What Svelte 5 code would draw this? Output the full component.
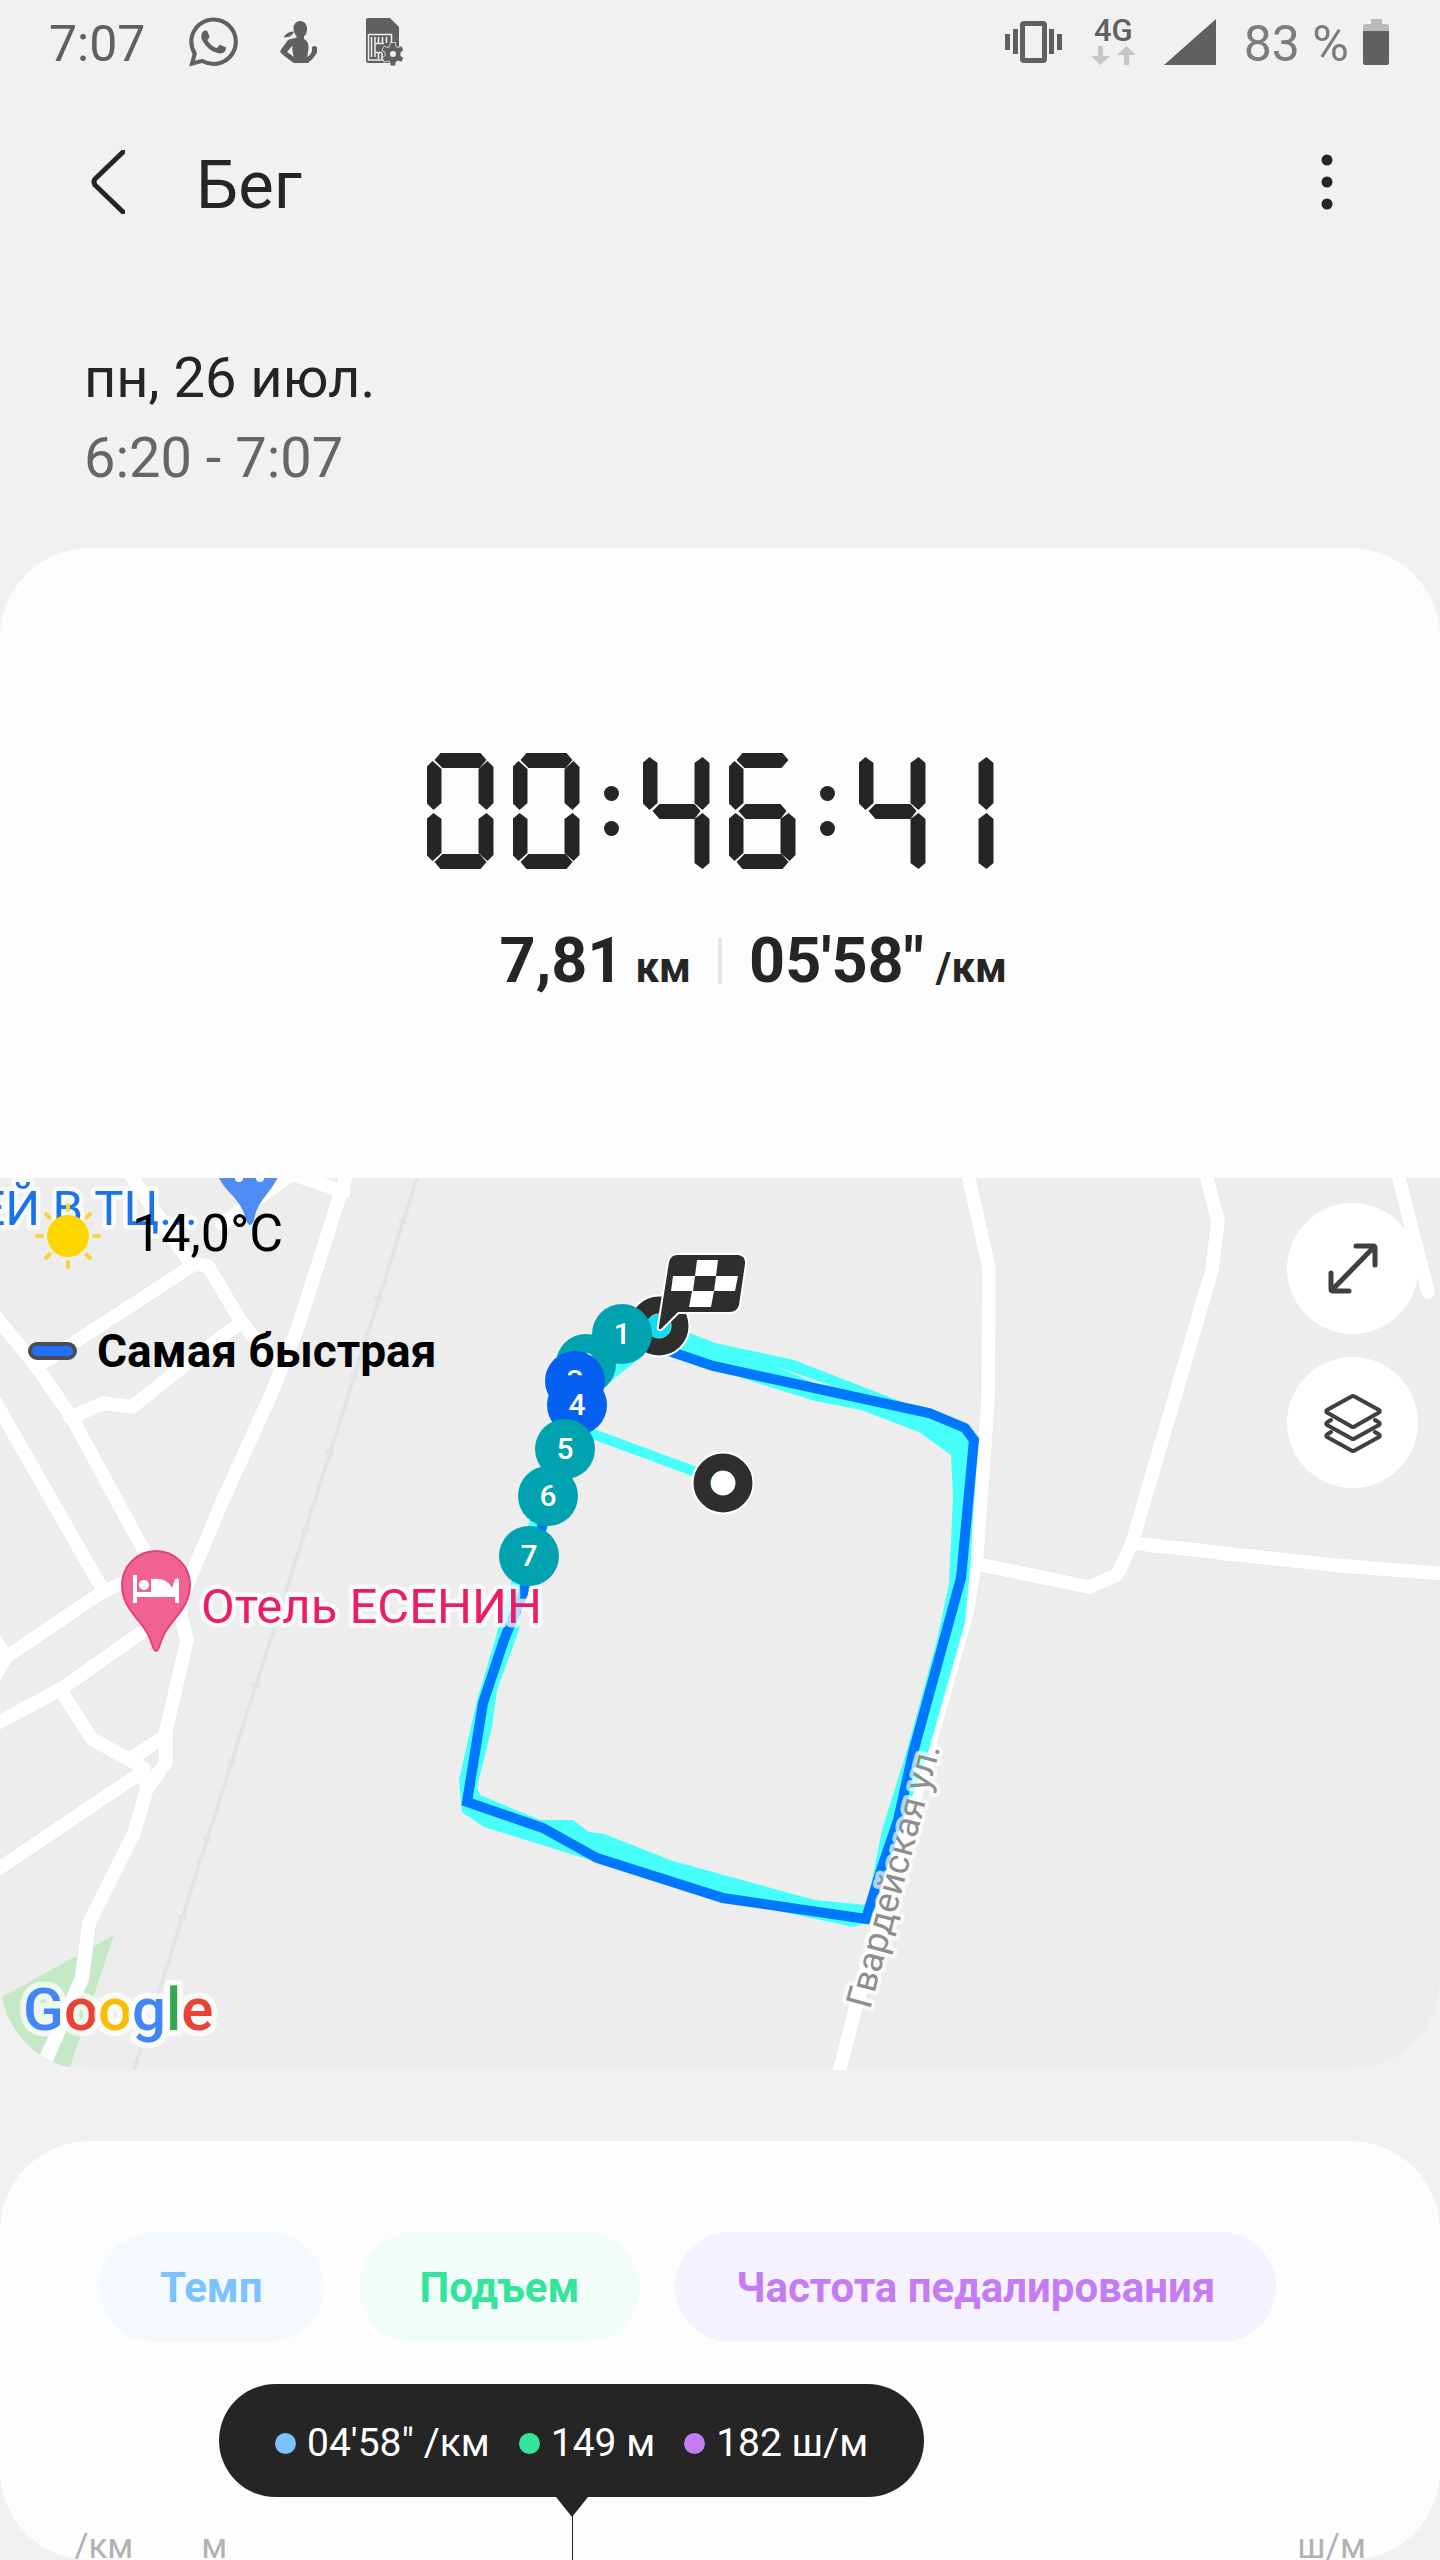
<script>
  const segments = {
    '0': 'abcdef',
    '1': 'bc',
    '4': 'fgbc',
    '6': 'afgedc'
  };
  const duration = '00:46:41';

  const kilometres = [
    { n: 1, x: 622, y: 1334 },
    { n: 2, x: 586, y: 1364 },
    { n: 3, x: 575, y: 1381, fast: true },
    { n: 4, x: 577, y: 1405, fast: true },
    { n: 5, x: 565, y: 1449 },
    { n: 6, x: 548, y: 1496 },
    { n: 7, x: 529, y: 1556 }
  ];

  const roads = [
    'M348,1170 L298,1327 L273,1390 L223,1500 L185,1590 L180,1611 L187,1640 L166,1731 L166,1762 L147,1789 L134,1833 L89,1923 L82,1978 L46,2059 L38,2080',
    'M-8,1312 L37,1367 L72,1418 L142,1547 L178,1608',
    'M-8,1396 L0,1410 L104,1592',
    'M150,1576 L123,1583 L101,1593 L6,1657 L-12,1688 M6,1657 L-8,1634',
    'M-8,1726 L61,1689 L142,1632 L178,1607',
    'M61,1691 L92,1739 L130,1760 L144,1768 L147,1789',
    'M-8,1873 L138,1775',
    'M130,1759 L163,1738',
    'M127,1170 L190,1263 L208,1266 L240,1320 L273,1362',
    'M192,1266 L75,1342 L36,1367',
    'M240,1323 L200,1353 L132,1407 L104,1403 L70,1418',
    'M222,1224 L292,1174 L344,1192',
    'M967,1170 L989,1268 L988,1400 L977,1553 L967,1612 L855,2010 L837,2080',
    'M1205,1170 L1218,1221 L1212,1270 L1132,1543 L1117,1575 L1089,1587 L977,1564',
    'M1132,1543 L1240,1555 L1343,1566 L1450,1574',
    'M1397,1170 L1428,1292'
  ];

  const railTicks = [
    [403, 1221], [378, 1298], [354, 1376], [330, 1453], [306, 1530],
    [280, 1608], [256, 1685], [231, 1762], [207, 1839], [182, 1917]
  ];

  const rays = [0, 45, 90, 135, 180, 225, 270, 315];
</script>

<div class="app">
  <header class="status">
    <div class="group">
      <span class="clock">7:07</span>
      <svg class="whatsapp" viewBox="0 0 24 24" aria-hidden="true">
        <path d="M17.472 14.382c-.297-.149-1.758-.867-2.03-.967-.273-.099-.471-.148-.67.15-.197.297-.767.966-.94 1.164-.173.199-.347.223-.644.075-.297-.15-1.255-.463-2.39-1.475-.883-.788-1.48-1.761-1.653-2.059-.173-.297-.018-.458.13-.606.134-.133.298-.347.446-.52.149-.174.198-.298.298-.497.099-.198.05-.371-.025-.52-.075-.149-.669-1.612-.916-2.207-.242-.579-.487-.5-.669-.51-.173-.008-.371-.01-.57-.01-.198 0-.52.074-.792.372-.272.297-1.04 1.016-1.04 2.479 0 1.462 1.065 2.875 1.213 3.074.149.198 2.096 3.2 5.077 4.487.709.306 1.262.489 1.694.625.712.227 1.36.195 1.871.118.571-.085 1.758-.719 2.006-1.413.248-.694.248-1.289.173-1.413-.074-.124-.272-.198-.57-.347m-5.421 7.403h-.004a9.87 9.87 0 01-5.031-1.378l-.361-.214-3.741.982.998-3.648-.235-.374a9.86 9.86 0 01-1.51-5.26c.001-5.45 4.436-9.884 9.888-9.884 2.64 0 5.122 1.03 6.988 2.898a9.825 9.825 0 012.893 6.994c-.003 5.45-4.437 9.884-9.885 9.884m8.413-18.297A11.815 11.815 0 0012.05 0C5.495 0 .16 5.335.157 11.892c0 2.096.547 4.142 1.588 5.945L.057 24l6.305-1.654a11.882 11.882 0 005.683 1.448h.005c6.554 0 11.89-5.335 11.893-11.893a11.821 11.821 0 00-3.48-8.413z" />
      </svg>
      <svg class="woman" viewBox="0 0 38 42" aria-hidden="true">
        <path d="M20 0c4 0 7 3 7 7 0 3-.5 7-3 8v3c3 1.500 4.500 4 4.500 8 0 4-1 6-1 10 2.500-2 4.500-4.500 4.500-6.500v-3c1-2 4-2 5 0v5c-2 4-5 7-9 10.500-2 1.200-11 1.300-14 0C9 38.500 4 35 .5 31.500c-.7-1 0-2 .5-3L8 19c2-1.500 6-1 8.500-2.500V15C14 13 13.500 9 13.500 7c0-4 3-7 6.500-7z" />
        <path d="M14 10.500c-1 3-4 6-10.500 6 1.500-3 5-6 10.500-6z" />
        <path class="paper" d="M12.500 24.500L7 31l7 5c-1.500-4-2-7-1.500-11.500z" />
      </svg>
      <svg class="sim" viewBox="0 0 38 48" aria-hidden="true">
        <path d="M2 0h22l9 9v31a5 5 0 0 1-5 5H2a2 2 0 0 1-2-2V2a2 2 0 0 1 2-2z" />
        <path class="line" d="M2.500 16.500h23v11M2.500 16.500V42H20M5.500 19v20M9 19v20M9 25.500h9M12.500 19v6M16.500 19v6M20.500 19v6M9 34.500h7M12.500 35v6M16 35v6" />
        <path class="gear" d="M24 24h5l.5 4 2.500 1.200 3.500-1.700 2 4-3 2.500v3.500l3 2.500-2 4-3.500-1.500-2.500 1.500-.5 4h-5l-.5-4-2.500-1.500-3.500 1.500-2-4 3-2.500V34l-3-2.500 2-4 3.500 1.700 2.500-1.200z" transform="translate(2 2.500) scale(.94)" />
        <circle class="paper" cx="27" cy="36" r="3" />
      </svg>
    </div>
    <div class="group">
      <svg class="vibrate" viewBox="0 0 58 42" aria-hidden="true">
        <rect x="0" y="13" width="5" height="16" /><rect x="8" y="8" width="5" height="25" />
        <rect x="44" y="8" width="5" height="25" /><rect x="52" y="13" width="5" height="16" />
        <path fill-rule="evenodd" d="M19 0h19a4 4 0 0 1 4 4v34a4 4 0 0 1-4 4H19a4 4 0 0 1-4-4V4a4 4 0 0 1 4-4zM20 5v32h17V5z" />
      </svg>
      <span class="network">
        <span>4G</span>
        <svg viewBox="0 0 45 19" aria-hidden="true">
          <path d="M7 0h5v10h7L9.500 19 0 10h7zM33 19h5V9h7L35.500 0 26 9h7z" />
        </svg>
      </span>
      <svg class="signal" viewBox="0 0 52 46" aria-hidden="true"><path d="M52 0v46H0z" /></svg>
      <span class="charge">83 %</span>
      <svg class="battery" viewBox="0 0 26 46" aria-hidden="true">
        <path class="pale" d="M8 0h11v5h5a2 2 0 0 1 2 2v6H0V7a2 2 0 0 1 2-2h6z" />
        <path d="M0 12h26v32a2 2 0 0 1-2 2H2a2 2 0 0 1-2-2z" />
      </svg>
    </div>
  </header>

  <nav class="bar">
    <button class="back" aria-label="Назад">
      <svg viewBox="0 0 34 64" aria-hidden="true"><path d="M32 2L4 29q-2 3 0 6L32 62" /></svg>
    </button>
    <h1>Бег</h1>
    <button class="more" aria-label="Ещё">
      <svg viewBox="0 0 12 56" aria-hidden="true">
        <circle cx="6" cy="6" r="5.500" /><circle cx="6" cy="28" r="5.500" /><circle cx="6" cy="50" r="5.500" />
      </svg>
    </button>
  </nav>

  <div class="when">
    <p>пн, 26 июл.</p>
    <p class="muted">6:20 - 7:07</p>
  </div>

  <section class="card">
    <div class="summary">
      <div class="timer" role="timer" aria-label={duration}>
        {#each duration as ch}
          {#if ch === ':'}
            <span class="colon"><i></i><i></i></span>
          {:else}
            <span class="digit" class:open={!segments[ch].includes('a')} class:narrow={ch === '1'}>
              {#each segments[ch] as s}<i class={'seg seg-' + s}></i>{/each}
            </span>
          {/if}
        {/each}
      </div>
      <div class="metrics">
        <p class="distance"><span>7,81</span><small>км</small></p>
        <span class="rule"></span>
        <p class="pace"><span>05'58"</span><small>/км</small></p>
      </div>
    </div>

    <div class="map">
      <svg class="canvas" viewBox="0 1178 1440 892" role="img" aria-label="Маршрут пробежки">
        <path class="park" d="M2,1997 L114,1935 L69,2070 L0,2070 Z" />
        <path class="rail" d="M417,1178 L330,1453 L256,1685 L134,2070" />
        {#each railTicks as [x, y]}
          <path class="rail" d="M{x - 4},{y - 1} l8,2" />
        {/each}
        {#each roads as d}<path class="edge" {d} />{/each}
        {#each roads as d}<path class="road" {d} />{/each}
        <path class="block" d="M158,1749 L148,1757 L151,1765 L155,1767 L159,1761 Z" />

        <path class="track" fill-rule="evenodd" d="M650,1326 L690,1333 L715,1343 L794,1360 L897,1400 L965,1426 L978,1440 L972,1533 L971,1560 L965,1623 L928,1753 L882,1880 L867,1923 L853,1927 L720,1898 L597,1862 L484,1827 L462,1812 L459,1780 L477,1700 L495,1640 L511,1583 L530,1520 L560,1440 L600,1360 Z
          M650,1350 L700,1362 L754,1382 L815,1401 L861,1410 L919,1432 L951,1455 L953,1497 L949,1583 L937,1640 L907,1750 L882,1830 L867,1905 L815,1900 L673,1861 L604,1834 L589,1832 L573,1820 L540,1820 L480,1795 L477,1787 L492,1727 L497,1690 L519,1630 L521,1610 L550,1520 L580,1440 L600,1390 Z" />
        <path class="block" d="M777,1367 L833,1386 L815,1383 Z" />
        <path class="link" d="M585,1431 L723,1482" />
        <path class="fast" d="M660,1348 L713,1366 L929,1413 L965,1428 L974,1440 L961,1578 L944,1640 L913,1753 L898,1820 L880,1873 L866,1919 L723,1898 L597,1858 L543,1828 L467,1802 L483,1703 L504,1640 L523,1593 L543,1523 L575,1440" />

        <g class="pin">
          <path d="M156,1651 C152,1651 153,1640 144,1628 C134,1614 122,1604 122,1585 A34,34 0 0 1 190,1585 C190,1604 178,1614 168,1628 C159,1640 160,1651 156,1651 Z" />
          <path class="bed" d="M133,1575 h4 v17 h14 v-13 q16,-2 21,9 l3,-9 q4,-2 4,2 v22 h-4 v-6 h-38 v6 h-4 Z" />
          <circle class="bed" cx="144" cy="1585" r="5" />
        </g>
        <path class="shop" d="M216,1170 C222,1192 240,1195 246,1220 Q250,1230 254,1220 C258,1198 272,1194 281,1170 Z" />
        <circle class="bed" cx="239" cy="1178" r="4" /><circle class="bed" cx="260" cy="1178" r="4" />

        <text class="place hotel" x="201" y="1623">Отель ЕСЕНИН</text>
        <text class="place mall" x="198" y="1225">ЕЙ В ТЦ...</text>
        <text class="street" transform="translate(870 2010) rotate(-75)">Гвардейская ул.</text>

        <circle class="ring halo" cx="723" cy="1483" r="23" /><circle class="ring" cx="723" cy="1483" r="21" />
        <circle class="hole" cx="723" cy="1483" r="12" />
        <circle class="ring halo" cx="659" cy="1326" r="23" /><circle class="ring" cx="659" cy="1326" r="21" />
        <circle class="hole cyan" cx="659" cy="1326" r="12" />
        <path class="flag" d="M677,1255 H738 Q746,1256 745,1264 L739,1305 Q737,1312 730,1312 H678 L661,1329 Q658,1330 659,1326 L669,1262 Q671,1255 677,1255 Z" />
        <path class="check" d="M697,1260 h21 l-2,16 h-21 Z M673,1276 h22 l-2,15 h-22 Z M716,1276 h22 l-3,15 h-21 Z M692,1291 h22 l-3,16 h-22 Z" />
        {#each kilometres as k}
          <circle class="km" class:quick={k.fast} cx={k.x} cy={k.y} r="30" />
          <text class="kmtext" x={k.x} y={k.y + 10}>{k.n}</text>
        {/each}

        <text class="google" x="23" y="2030"><tspan class="b">G</tspan><tspan class="r">o</tspan><tspan class="y">o</tspan><tspan class="b">g</tspan><tspan class="g">l</tspan><tspan class="r">e</tspan></text>
      </svg>

      <div class="overlay">
        <div class="weather">
          <svg viewBox="-33 -33 66 66" aria-hidden="true">
            <circle r="21" />
            {#each rays as a}<path d="M0,-26 V-31" transform="rotate({a})" />{/each}
          </svg>
          <span>14,0°C</span>
        </div>
        <div class="legend"><i></i><span>Самая быстрая</span></div>
      </div>
      <div class="tools">
        <button aria-label="Развернуть карту">
          <svg class="expand" viewBox="0 0 60 60" aria-hidden="true"><path d="M33 7H50Q52 7 52 9V26M8 34V50Q8 52 10 52H26M9 51L51 8" /></svg>
        </button>
        <button aria-label="Слои">
          <svg viewBox="0 0 60 60" aria-hidden="true">
            <path d="M28.500 3.500Q30 2.500 31.500 3.500L56 17Q57.500 18.500 56 19.500L31.500 33.500Q30 34.500 28.500 33.500L4 19.500Q2.500 18.500 4 17ZM8 27L4 29.500Q2.500 31 4 32L28.500 45.500Q30 46.500 31.500 45.500L56 32Q57.500 31 56 29.500L52 27M8 39L4 41.500Q2.500 43 4 44L28.500 57.500Q30 58.500 31.500 57.500L56 44Q57.500 43 56 41.500L52 39" />
          </svg>
        </button>
      </div>
    </div>
  </section>

  <section class="card chart">
    <div class="chips">
      <button class="chip blue">Темп</button>
      <button class="chip green">Подъем</button>
      <button class="chip violet">Частота педалирования</button>
    </div>
    <div class="tip" role="tooltip">
      <span class="value blue">04'58" /км</span>
      <span class="value green">149 м</span>
      <span class="value violet">182 ш/м</span>
    </div>
    <div class="axis">
      <span>/км</span>
      <span>м</span>
      <span class="last">ш/м</span>
    </div>
  </section>
</div>

<style>
  :global(body) {
    background: #f1f1f1;
  }
  .app {
    min-height: 100vh;
    overflow: hidden;
    background: #f1f1f1;
    color: #252525;
    font-family: Roboto, 'Liberation Sans', sans-serif;
  }
  p,
  h1 {
    margin: 0;
    font-weight: 400;
  }
  button {
    border: 0;
    padding: 0;
    background: none;
    color: inherit;
    font: inherit;
  }
  svg {
    display: block;
    flex: none;
  }

  .status {
    display: flex;
    justify-content: space-between;
    align-items: center;
    height: 84px;
    padding: 0 51px 0 49px;
    color: #606060;
    fill: #606060;
    font-size: 50px;
  }
  .group {
    display: flex;
    align-items: center;
  }
  .clock,
  .charge {
    padding-top: 4px;
  }
  .charge {
    margin: 0 14px 0 28px;
    color: #7c7c7c;
  }
  .whatsapp {
    width: 49px;
    height: 50px;
    margin-left: 44px;
  }
  .woman {
    width: 38px;
    height: 42px;
    margin-left: 42px;
  }
  .sim {
    width: 38px;
    height: 48px;
    margin-left: 48px;
  }
  .paper {
    fill: #f1f1f1;
  }
  .line {
    fill: none;
    stroke: #f1f1f1;
    stroke-width: 1.5;
  }
  .gear {
    stroke: #f1f1f1;
    stroke-width: 1.5;
    paint-order: stroke;
  }
  .vibrate {
    width: 58px;
    height: 42px;
  }
  .network {
    display: grid;
    justify-items: center;
    gap: 4px;
    margin: 0 28px;
    font-size: 31px;
    line-height: 23px;
    font-weight: 500;
  }
  .network svg {
    width: 45px;
    height: 19px;
    fill: #c6c6c6;
  }
  .signal {
    width: 52px;
    height: 46px;
  }
  .battery {
    width: 26px;
    height: 46px;
  }
  .pale {
    fill: #bababa;
  }

  .bar {
    display: flex;
    align-items: center;
    height: 196px;
    padding: 0 107px 0 91px;
  }
  .back svg {
    width: 34px;
    height: 64px;
    fill: none;
    stroke: #252525;
    stroke-width: 5;
    stroke-linecap: round;
  }
  .bar h1 {
    flex: 1;
    margin-left: 71px;
    padding-top: 6px;
    font-size: 67px;
    line-height: 80px;
  }
  .more svg {
    width: 12px;
    height: 56px;
    fill: #252525;
  }

  .when {
    padding: 58px 84px 50px;
    font-size: 56px;
    line-height: 80px;
  }
  .muted {
    color: #666;
  }

  .card {
    border-radius: 90px;
    background: #fdfdfd;
    overflow: hidden;
  }
  .summary {
    padding: 205px 0 187px;
  }
  .timer {
    display: flex;
    justify-content: center;
    align-items: center;
    gap: 19px;
    padding-right: 20px;
  }
  .digit {
    display: grid;
    width: 67px;
    height: 116px;
  }
  .digit.narrow {
    margin-left: -18px;
  }
  .seg {
    grid-area: 1 / 1;
    background: #252525;
  }
  .seg-a { clip-path: polygon(8px 7px, 14px 0, 54px 0, 60px 7px, 53px 15px, 16px 15px); }
  .seg-b { clip-path: polygon(52px 16px, 61px 8px, 67px 14px, 67px 50px, 60px 57px, 52px 50px); }
  .seg-c { clip-path: polygon(52px 66px, 60px 60px, 67px 66px, 67px 102px, 61px 108px, 52px 100px); }
  .seg-d { clip-path: polygon(8px 109px, 16px 101px, 53px 101px, 60px 109px, 54px 116px, 14px 116px); }
  .seg-e { clip-path: polygon(0 66px, 7px 60px, 15px 66px, 15px 100px, 6px 108px, 0 102px); }
  .seg-f { clip-path: polygon(0 14px, 6px 8px, 15px 16px, 15px 50px, 7px 57px, 0 50px); }
  .seg-g { clip-path: polygon(10px 58px, 17px 51px, 52px 51px, 58px 58px, 52px 66px, 17px 66px); }
  .open .seg-b { clip-path: polygon(52px 10px, 60px 4px, 67px 10px, 67px 50px, 60px 57px, 52px 50px); }
  .open .seg-c { clip-path: polygon(52px 66px, 60px 60px, 67px 66px, 67px 110px, 60px 116px, 52px 110px); }
  .open .seg-f { clip-path: polygon(0 10px, 7px 4px, 15px 10px, 15px 50px, 7px 57px, 0 50px); }
  .colon {
    display: grid;
    gap: 20px;
    margin: 0 5px;
  }
  .colon i {
    width: 15px;
    height: 15px;
    border-radius: 50%;
    background: #252525;
  }
  .metrics {
    display: grid;
    grid-template-columns: 1fr 4px 1fr;
    align-items: center;
    margin-top: 60px;
    margin-bottom: -2px;
    font-size: 63px;
    line-height: 64px;
  }
  .metrics p {
    display: flex;
    align-items: baseline;
    gap: 12px;
    font-weight: 700;
  }
  .metrics small {
    font-size: 42px;
    line-height: 42px;
  }
  .distance {
    justify-content: flex-end;
    padding-right: 27px;
  }
  .pace {
    padding-left: 27px;
  }
  .rule {
    height: 46px;
    background: #e6e6e6;
  }

  .map {
    position: relative;
    border-radius: 0 0 90px 90px;
    background: #ededed;
    overflow: hidden;
  }
  .canvas {
    width: 100%;
    height: auto;
    background: #ededed;
  }
  .park { fill: #c5e8c7; }
  .block { fill: #ededed; }
  .rail { fill: none; stroke: #e1e4e4; stroke-width: 4; }
  .edge, .road { fill: none; stroke-linecap: round; stroke-linejoin: round; }
  .edge { stroke: #e1e3e3; stroke-width: 15; }
  .road { stroke: #fff; stroke-width: 14; }
  .track { fill: #46fffa; }
  .link { stroke: #46fffa; stroke-width: 10; }
  .fast { fill: none; stroke: #0077ff; stroke-width: 10; }
  .pin path { fill: #f06292; stroke: #e5417b; stroke-width: 2; }
  .pin .bed, .bed { fill: #fff; stroke: none; }
  .shop { fill: #4f8df5; }
  .place, .street, .google { paint-order: stroke; stroke: rgba(255, 255, 255, 0.7); stroke-linejoin: round; }
  .place { font-size: 49px; stroke-width: 9; }
  .hotel { fill: #e91e63; }
  .mall { fill: #1a73e8; text-anchor: end; }
  .street { fill: #8b8f8f; font-size: 36px; stroke-width: 8; }
  .ring { fill: none; stroke: #2e2e2e; stroke-width: 17; }
  .ring.halo { stroke: #fff; }
  .hole { fill: #fff; }
  .hole.cyan { fill: #14dcee; }
  .flag { fill: #2e2e2e; stroke: #fff; stroke-width: 4; paint-order: stroke; }
  .check { fill: #fff; }
  .km { fill: #00a2b0; }
  .km.quick { fill: #055ff0; }
  .kmtext { fill: #fff; font-size: 30px; font-weight: 500; text-anchor: middle; }
  .google { font-size: 60px; font-weight: 500; stroke-width: 12; }
  .google .b { fill: #4285f4; }
  .google .r { fill: #ea4335; }
  .google .y { fill: #fbbc05; }
  .google .g { fill: #34a853; }

  .overlay {
    position: absolute;
    top: 25px;
    left: 28px;
    color: #000;
  }
  .weather {
    display: flex;
    align-items: flex-start;
    gap: 31px;
    padding-left: 7px;
    font-size: 52px;
    line-height: 62px;
  }
  .weather svg {
    width: 66px;
    height: 66px;
    fill: #ffd500;
    stroke: #f7d43a;
    stroke-width: 4;
    stroke-linecap: round;
  }
  .weather circle {
    stroke: none;
  }
  .legend {
    display: flex;
    align-items: center;
    gap: 20px;
    margin-top: 52px;
    font-size: 46px;
    line-height: 60px;
    font-weight: 700;
  }
  .legend i {
    box-sizing: border-box;
    width: 49px;
    height: 18px;
    border: 4px solid #4a4d57;
    border-radius: 9px;
    background: #1f70fa;
  }
  .tools {
    position: absolute;
    top: 25px;
    right: 22px;
    display: grid;
    gap: 23px;
  }
  .tools button {
    display: grid;
    place-items: center;
    width: 131px;
    height: 131px;
    border-radius: 50%;
    background: #fff;
  }
  .tools svg {
    width: 60px;
    height: 60px;
    fill: none;
    stroke: #404040;
    stroke-width: 4;
    stroke-linecap: round;
    stroke-linejoin: round;
  }
  .tools .expand {
    stroke-width: 5;
  }

  .chart {
    margin-top: 71px;
    padding-top: 91px;
  }
  .chips {
    display: flex;
    gap: 35px;
    padding: 0 99px;
  }
  .chip {
    padding: 2px 61px 0;
    border-radius: 55px;
    font-size: 42px;
    line-height: 108px;
    font-weight: 700;
    white-space: nowrap;
  }
  .chip.blue { background: #f4f9fe; color: #7bc2ff; }
  .chip.green { background: #f2fdf9; color: #33e59b; }
  .chip.violet { background: #f5f1fe; color: #c37cf2; }
  .tip {
    position: relative;
    display: flex;
    gap: 29px;
    width: fit-content;
    margin: 42px 0 37px 219px;
    padding: 6px 56px 0;
    border-radius: 57px;
    background: #252525;
    color: #fff;
    font-size: 39px;
    line-height: 107px;
    white-space: nowrap;
  }
  .tip::before {
    content: '';
    position: absolute;
    top: 100%;
    left: 50%;
    width: 1px;
    height: 63px;
    background: #252525;
  }
  .tip::after {
    content: '';
    position: absolute;
    top: 100%;
    left: 50%;
    margin-left: -16px;
    border: 16px solid transparent;
    border-top: 20px solid #252525;
    border-bottom: 0;
  }
  .value {
    display: flex;
    align-items: center;
    gap: 11px;
  }
  .value::before {
    content: '';
    width: 21px;
    height: 21px;
    border-radius: 50%;
    background: currentColor;
  }
  .value.blue::before { background: #7bc2ff; }
  .value.green::before { background: #33e59b; }
  .value.violet::before { background: #c37cf2; }
  .axis {
    display: flex;
    gap: 68px;
    padding: 0 74px;
    color: #b2b2b2;
    font-size: 35px;
    line-height: 26px;
  }
  .axis .last {
    margin-left: auto;
  }
</style>
